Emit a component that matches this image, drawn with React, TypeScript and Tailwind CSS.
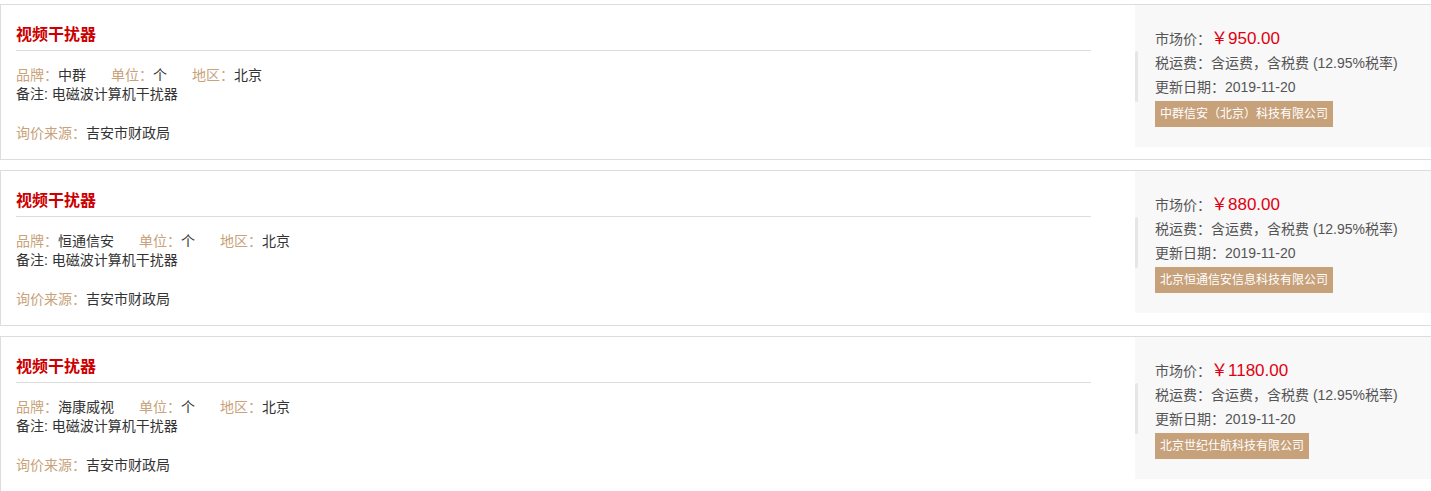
import React from "react";

type Item = {
  brand: string;
  price: string;
  company: string;
};

const items: Item[] = [
  { brand: "中群", price: "950.00", company: "中群信安（北京）科技有限公司" },
  { brand: "恒通信安", price: "880.00", company: "北京恒通信安信息科技有限公司" },
  { brand: "海康威视", price: "1180.00", company: "北京世纪仕航科技有限公司" },
];

const Card = ({ item }: { item: Item }) => {
  return (
    <div className="flex w-[1445px] h-[156px] border border-[#dddddd] bg-white mb-[10px]">
      <div className="w-[1134px] shrink-0 pl-[15px] pr-[44px]">
        <div className="pt-[18px] pb-[3px] border-b border-[#dddddd] text-[16px] leading-6 font-bold text-[#cc0000]">
          视频干扰器
        </div>
        <div className="mt-[15px] flex gap-[25px] text-[14px] leading-[19px] text-[#333333]">
          <span>
            <span className="text-[#c8a27a]">品牌：</span>
            {item.brand}
          </span>
          <span>
            <span className="text-[#c8a27a]">单位：</span>个
          </span>
          <span>
            <span className="text-[#c8a27a]">地区：</span>北京
          </span>
        </div>
        <div className="text-[14px] leading-[19px] text-[#333333]">备注: 电磁波计算机干扰器</div>
        <div className="mt-[20px] text-[14px] leading-[19px] text-[#333333]">
          <span className="text-[#c8a27a]">询价来源：</span>吉安市财政局
        </div>
      </div>
      <div className="relative self-start w-[310px] h-[142px] bg-[#f8f8f8] pl-5 pt-[22px] text-[14px] leading-6 text-[#555555]">
        <div className="absolute left-0 top-[46px] w-[3px] h-[51px] rounded-sm bg-[#e6e6e6]" />
        <div>
          市场价：<span className="text-[17px] text-[#e00012]">￥{item.price}</span>
        </div>
        <div>税运费：含运费，含税费 (12.95%税率)</div>
        <div>更新日期：2019-11-20</div>
        <div className="mt-[2px] inline-block h-[26px] px-[5px] bg-[#c7a17a] text-white text-[12px] leading-[26px]">
          {item.company}
        </div>
      </div>
    </div>
  );
};

const App = () => {
  return (
    <div
      className="w-[1431px] h-[491px] overflow-hidden bg-white pt-1"
      style={{ fontFamily: '"Liberation Sans", "Noto Sans CJK SC", sans-serif' }}
    >
      {items.map((it) => (
        <Card key={it.company} item={it} />
      ))}
    </div>
  );
};

export default App;
